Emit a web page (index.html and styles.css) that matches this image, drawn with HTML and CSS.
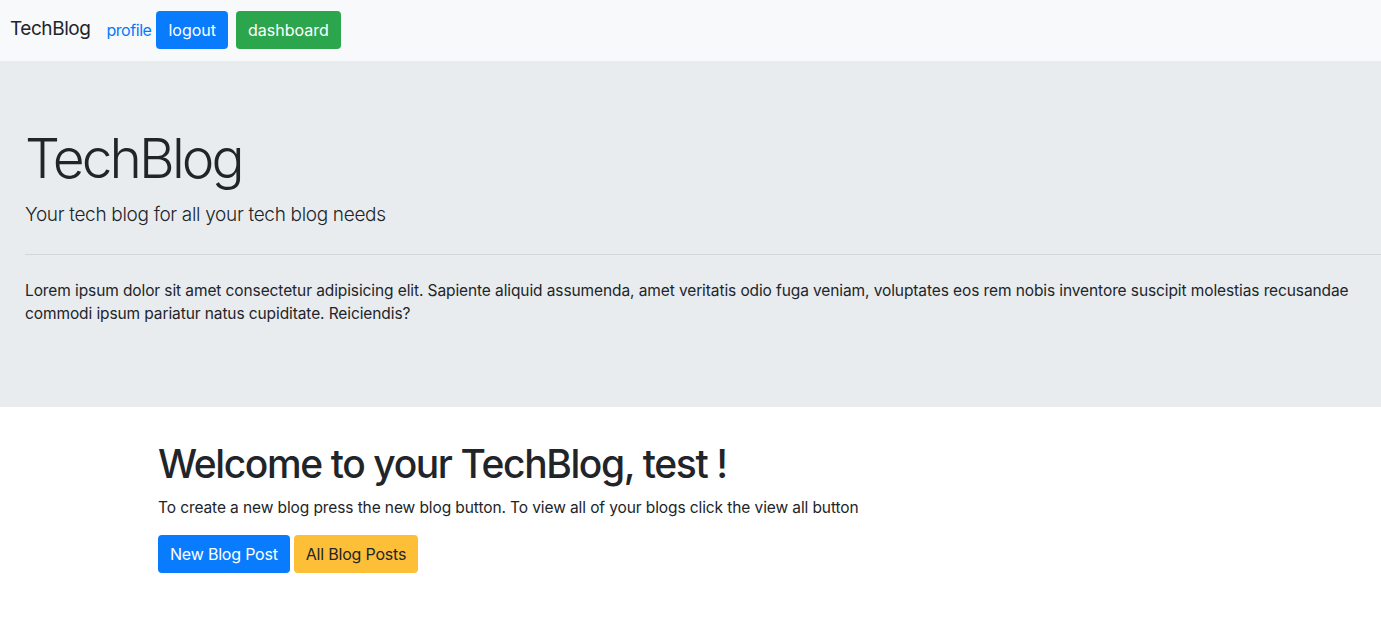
FILE: index.html
```html
<!DOCTYPE html>
<html lang="en">
<head>
<meta charset="utf-8">
<title>TechBlog</title>
<link rel="stylesheet" href="styles.css">
</head>
<body>
<nav class="navbar">
  <a class="brand" href="#">TechBlog</a>
  <a class="nav-link" href="#">profile</a>
  <a class="btn btn-primary" href="#">logout</a>
  <a class="btn btn-success" href="#">dashboard</a>
</nav>
<header class="jumbotron">
  <h1 class="display">TechBlog</h1>
  <p class="lead">Your tech blog for all your tech blog needs</p>
  <hr class="divider">
  <p class="body-text">Lorem ipsum dolor sit amet consectetur adipisicing elit. Sapiente aliquid assumenda, amet veritatis odio fuga veniam, voluptates eos rem nobis inventore suscipit molestias recusandae commodi ipsum pariatur natus cupiditate. Reiciendis?</p>
</header>
<main class="welcome">
  <h1 class="welcome-title">Welcome to your TechBlog, test !</h1>
  <p class="welcome-text">To create a new blog press the new blog button. To view all of your blogs click the view all button</p>
  <div class="actions">
    <a class="btn btn-primary" href="#">New Blog Post</a>
    <a class="btn btn-warning" href="#">All Blog Posts</a>
  </div>
</main>
</body>
</html>
```
FILE: styles.css
```css
* { box-sizing: border-box; }
html, body {
  margin: 0;
  padding: 0;
}
body {
  font-family: Inter, "Noto Sans", "Liberation Sans", sans-serif;
  font-size: 16px;
  line-height: 1.5;
  color: #212529;
  background: #fff;
  overflow-x: hidden;
}
a { text-decoration: none; }

.navbar {
  display: flex;
  align-items: center;
  height: 61px;
  padding: 0 10px 2px;
  background: #f8f9fa;
}
.brand {
  font-size: 19px;
  color: #212529;
  margin-right: 16px;
  letter-spacing: -0.45px;
}
.nav-link {
  color: #007bff;
  margin-right: 5px;
  letter-spacing: -0.45px;
}
.btn {
  display: inline-flex;
  align-items: center;
  height: 38px;
  padding: 0 12px;
  border-radius: 4px;
  font-size: 16px;
  letter-spacing: -0.2px;
}
.navbar .btn { letter-spacing: 0; }
.navbar .btn + .btn { margin-left: 8px; }
.btn-primary { background: #087cfd; color: #fff; }
.btn-success { background: #2ca64c; color: #fff; }
.btn-warning { background: #febf38; color: #212529; }

.jumbotron {
  background: #e9ecef;
  padding: 64px 31px 65px 25px;
  margin-bottom: 33px;
}
.display {
  font-size: 55px;
  font-weight: 300;
  line-height: 67px;
  margin: 0 0 8px;
  letter-spacing: -2.9px;
}
.lead {
  font-size: 19px;
  font-weight: 300;
  line-height: 30px;
  margin: 0;
  letter-spacing: -0.32px;
}
.divider {
  border: 0;
  border-top: 1px solid #d3d6d9;
  margin: 24px -31px 24px 0;
}
.body-text {
  margin: 0 0 16px;
  font-size: 15.5px;
  letter-spacing: -0.1px;
}

.welcome {
  padding-left: 158px;
}
.welcome-title {
  font-size: 39px;
  font-weight: 500;
  line-height: 48px;
  margin: 0 0 8px;
  letter-spacing: -1.4px;
}
.welcome-text {
  margin: 0 0 16px;
  font-size: 15.5px;
  letter-spacing: -0.1px;
}
.actions {
  display: flex;
  gap: 4px;
}
```
